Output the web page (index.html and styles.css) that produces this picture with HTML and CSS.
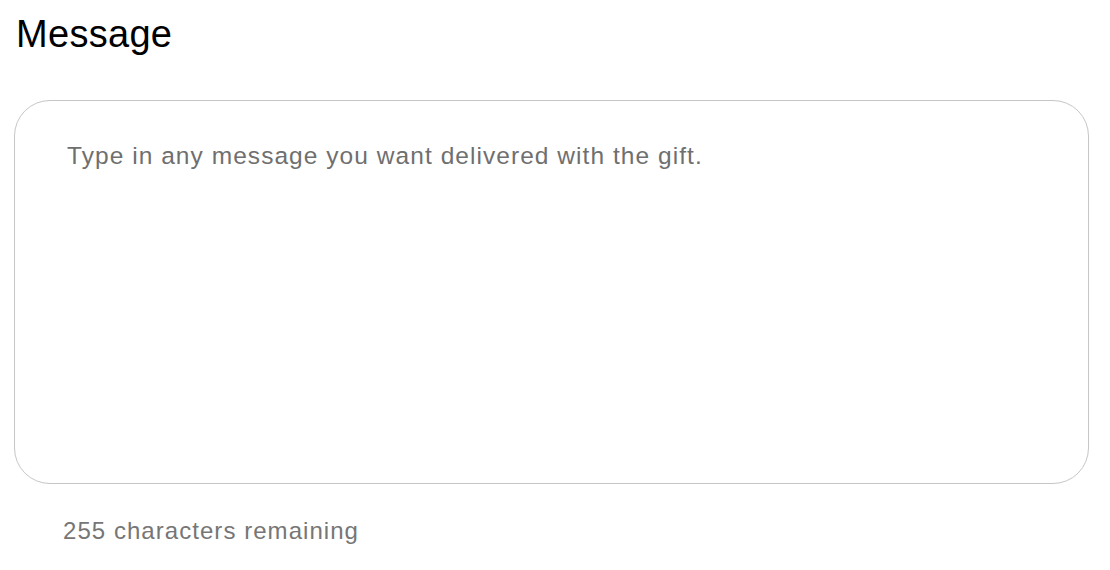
FILE: index.html
```html
<!DOCTYPE html>
<html lang="en">
<head>
<meta charset="UTF-8">
<title>Message</title>
<link rel="stylesheet" href="styles.css">
</head>
<body>

<div class="champ">
  <label class="titre" for="message">Message</label>
  <textarea id="message" class="zone" maxlength="255" placeholder="Type in any message you want delivered with the gift."></textarea>
  <div class="restant">255 characters remaining</div>
</div>

</body>
</html>
```

FILE: styles.css
```css
* { margin: 0; padding: 0; box-sizing: border-box; }

body {
  font-family: "Liberation Sans", Arial, sans-serif;
  background: #fff;
  color: #000;
}

.champ {
  display: flex;
  flex-direction: column;
  padding: 12px 21px 0 14px;
}

.titre {
  font-size: 38px;
  line-height: 44px;
  letter-spacing: 0.3px;
  padding-left: 2px;
  color: #000;
}

.zone {
  margin-top: 44px;
  height: 384px;
  border: 1px solid #c6c6c6;
  border-radius: 36px;
  padding: 40px 52px;
  font-family: inherit;
  font-size: 24.5px;
  line-height: 30px;
  letter-spacing: 1.05px;
  color: #333;
  resize: none;
  outline: none;
}

.zone::placeholder {
  color: #6f6f6f;
  opacity: 1;
}

.restant {
  margin-top: 32px;
  padding-left: 49px;
  font-size: 24px;
  line-height: 30px;
  letter-spacing: 1.05px;
  color: #767676;
}
```
